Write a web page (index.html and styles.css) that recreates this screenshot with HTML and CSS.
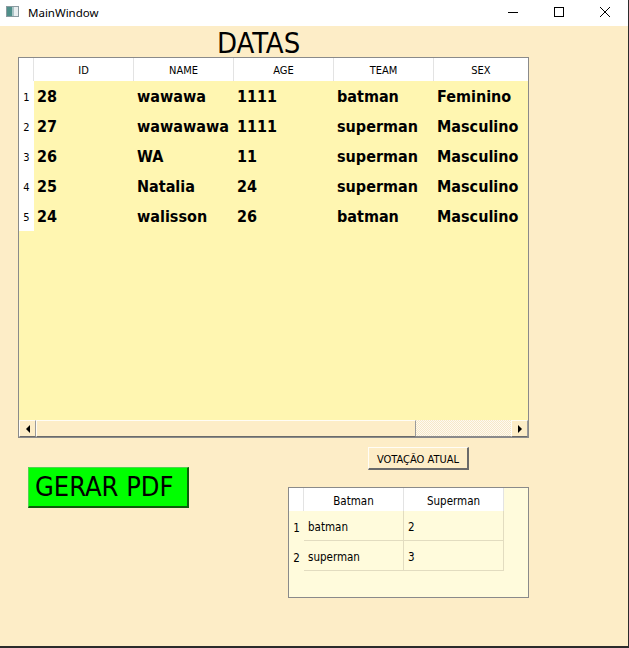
FILE: index.html
```html
<!DOCTYPE html>
<html>
<head>
<meta charset="utf-8">
<title>MainWindow</title>
<link rel="stylesheet" href="styles.css">
</head>
<body>
<div class="window">
  <div class="titlebar">
    <svg class="app-icon" width="13" height="11" viewBox="0 0 13 11">
      <rect x="0.5" y="0.5" width="12" height="10" fill="#e9eef0" stroke="#8a9aa0"/>
      <rect x="1" y="1" width="5" height="9" fill="#4f8f8a"/>
      <rect x="6" y="1" width="2" height="9" fill="#a9c4c6"/>
    </svg>
    <span class="title">MainWindow</span>
    <div class="controls">
      <span class="ctrl"><svg width="10" height="10" viewBox="0 0 10 10"><path d="M0 5.5H10" stroke="#000" stroke-width="1"/></svg></span>
      <span class="ctrl"><svg width="10" height="10" viewBox="0 0 10 10"><rect x="0.5" y="0.5" width="9" height="9" fill="none" stroke="#000"/></svg></span>
      <span class="ctrl"><svg width="10" height="10" viewBox="0 0 10 10"><path d="M0 0L10 10M10 0L0 10" stroke="#000" stroke-width="1"/></svg></span>
    </div>
  </div>
  <div class="content">
    <h1 class="heading">DATAS</h1>
    <div class="main-table">
      <div class="grid">
        <div class="hcorner"></div>
        <div class="hcell">ID</div>
        <div class="hcell">NAME</div>
        <div class="hcell">AGE</div>
        <div class="hcell">TEAM</div>
        <div class="hcell last">SEX</div>

        <div class="rnum">1</div><div class="cell">28</div><div class="cell">wawawa</div><div class="cell">1111</div><div class="cell">batman</div><div class="cell">Feminino</div>
        <div class="rnum">2</div><div class="cell">27</div><div class="cell">wawawawa</div><div class="cell">1111</div><div class="cell">superman</div><div class="cell">Masculino</div>
        <div class="rnum">3</div><div class="cell">26</div><div class="cell">WA</div><div class="cell">11</div><div class="cell">superman</div><div class="cell">Masculino</div>
        <div class="rnum">4</div><div class="cell">25</div><div class="cell">Natalia</div><div class="cell">24</div><div class="cell">superman</div><div class="cell">Masculino</div>
        <div class="rnum">5</div><div class="cell">24</div><div class="cell">walisson</div><div class="cell">26</div><div class="cell">batman</div><div class="cell">Masculino</div>
      </div>
      <div class="filler"></div>
      <div class="hscroll">
        <div class="sbtn"><span class="arrow-left"></span></div>
        <div class="thumb"></div>
        <div class="track"></div>
        <div class="sbtn"><span class="arrow-right"></span></div>
      </div>
    </div>
    <div class="bottom">
      <div class="left-col">
        <button class="pdf-btn">GERAR PDF</button>
      </div>
      <div class="right-col">
        <button class="vote-btn">VOTAÇÃO ATUAL</button>
        <div class="vote-table">
          <div class="vgrid">
            <div class="vcorner"></div>
            <div class="vhcell">Batman</div>
            <div class="vhcell">Superman</div>
            <div class="vrnum">1</div><div class="vcell">batman</div><div class="vcell">2</div>
            <div class="vrnum">2</div><div class="vcell">superman</div><div class="vcell">3</div>
          </div>
        </div>
      </div>
    </div>
  </div>
</div>
</body>
</html>
```

FILE: styles.css
```css
* { box-sizing: border-box; }
html, body { margin: 0; padding: 0; background: #fdedc7; }
body { font-family: "DejaVu Sans Condensed", "DejaVu Sans", sans-serif; font-stretch: condensed; }

.window {
  width: 629px;
  height: 648px;
  border-right: 1px solid #2b2b2b;
  border-bottom: 2px solid #2b2b2b;
  display: flex;
  flex-direction: column;
  background: #fdedc7;
}

.titlebar {
  height: 26px;
  background: #ffffff;
  display: flex;
  align-items: center;
  flex: none;
}
.app-icon { margin-left: 6px; margin-top: -3px; flex: none; }
.title {
  margin-left: 9px;
  font-family: "Noto Sans", sans-serif;
  font-stretch: normal;
  font-size: 11.5px;
  color: #000;
  margin-top: -2px;
}
.controls { margin-left: auto; display: flex; height: 26px; }
.ctrl {
  width: 46px;
  height: 26px;
  display: flex;
  align-items: center;
  justify-content: center;
  padding-bottom: 3px;
}

.content {
  flex: 1;
  padding-left: 18px;
  display: flex;
  flex-direction: column;
}

.heading {
  margin: 0;
  height: 31px;
  padding-left: 199px;
  font-weight: normal;
  font-size: 29px;
  line-height: 35px;
  color: #000;
  white-space: nowrap;
}

.main-table {
  width: 511px;
  height: 381px;
  border: 1px solid #8a8a8a;
  background: #fff6b1;
  display: flex;
  flex-direction: column;
}
.grid {
  display: grid;
  grid-template-columns: 15px 100px 100px 100px 100px 94px;
  grid-template-rows: 23px repeat(5, 30px);
}
.hcorner, .hcell {
  background: #ffffff;
  border-right: 1px solid #e3e3e3;
}
.hcell {
  font-size: 11px;
  text-align: center;
  line-height: 23px;
  padding-top: 1px;
  color: #000;
}
.hcell.last { border-right: none; }
.rnum {
  background: #ffffff;
  font-size: 11px;
  text-align: center;
  line-height: 30px;
  padding-top: 2px;
  color: #000;
}
.cell {
  font-weight: bold;
  font-size: 16px;
  line-height: 30px;
  padding-left: 3px;
  padding-top: 1px;
  color: #000;
  white-space: nowrap;
  overflow: hidden;
}
.filler { flex: 1; }

.hscroll {
  height: 17px;
  display: flex;
  flex: none;
}
.sbtn {
  width: 17px;
  height: 17px;
  background: #fdedc7;
  border-top: 1px solid #fffdf6;
  border-left: 1px solid #fffdf6;
  border-right: 1px solid #9a9a9a;
  border-bottom: 1px solid #6a6a6a;
  display: flex;
  align-items: center;
  justify-content: center;
  flex: none;
}
.arrow-left {
  width: 0; height: 0;
  border-top: 4px solid transparent;
  border-bottom: 4px solid transparent;
  border-right: 4px solid #000;
}
.arrow-right {
  width: 0; height: 0;
  border-top: 4px solid transparent;
  border-bottom: 4px solid transparent;
  border-left: 4px solid #000;
}
.thumb {
  width: 380px;
  flex: none;
  background: #fdedc7;
  border-top: 1px solid #fffdf6;
  border-left: 1px solid #fffdf6;
  border-right: 1px solid #9a9a9a;
  border-bottom: 1px solid #6a6a6a;
}
.track {
  flex: 1;
  background-color: #fdedc7;
  background-image: repeating-conic-gradient(#fffaf0 0 25%, #f6e8c8 0 50%);
  background-size: 2px 2px;
  border-bottom: 1px solid #8a8a8a;
}

.bottom {
  display: flex;
  align-items: flex-start;
}
.left-col {
  margin-left: 10px;
  margin-top: 29px;
  width: 161px;
}
.pdf-btn {
  width: 161px;
  height: 41px;
  background: #00ff00;
  border-top: 1px solid #4fd64f;
  border-left: 1px solid #4fd64f;
  border-right: 2px solid #0b5e0b;
  border-bottom: 2px solid #0b5e0b;
  font-family: "DejaVu Sans Condensed", "DejaVu Sans", sans-serif;
  font-stretch: condensed;
  font-size: 27px;
  text-align: left;
  padding: 0 0 0 6px;
  color: #000;
  line-height: 38px;
  white-space: nowrap;
}
.right-col {
  margin-left: 99px;
  width: 241px;
  display: flex;
  flex-direction: column;
}
.vote-btn {
  margin-top: 9px;
  margin-left: 80px;
  width: 101px;
  height: 23px;
  background: #fdedc7;
  border-top: 1px solid #fffdf6;
  border-left: 1px solid #fffdf6;
  border-right: 2px solid #6a6a6a;
  border-bottom: 2px solid #6a6a6a;
  font-family: "DejaVu Sans Condensed", "DejaVu Sans", sans-serif;
  font-stretch: condensed;
  font-size: 11px;
  padding: 2px 0 0 0;
  color: #000;
}
.vote-table {
  margin-top: 17px;
  width: 241px;
  height: 111px;
  border: 1px solid #8a8a8a;
  background: #fffbdc;
}
.vgrid {
  display: grid;
  grid-template-columns: 15px 100px 100px;
  grid-template-rows: 23px 30px 30px;
}
.vcorner, .vhcell {
  background: #ffffff;
  border-right: 1px solid #e3e3e3;
}
.vhcell {
  font-size: 11.5px;
  text-align: center;
  line-height: 23px;
  padding-top: 2px;
  color: #000;
}
.vrnum {
  font-size: 11.5px;
  text-align: center;
  line-height: 30px;
  padding-top: 2px;
  color: #000;
}
.vcell {
  font-size: 11.5px;
  line-height: 29px;
  padding-left: 4px;
  padding-top: 2px;
  color: #000;
  border-right: 1px solid #e2dcc0;
  border-bottom: 1px solid #e2dcc0;
}
```
